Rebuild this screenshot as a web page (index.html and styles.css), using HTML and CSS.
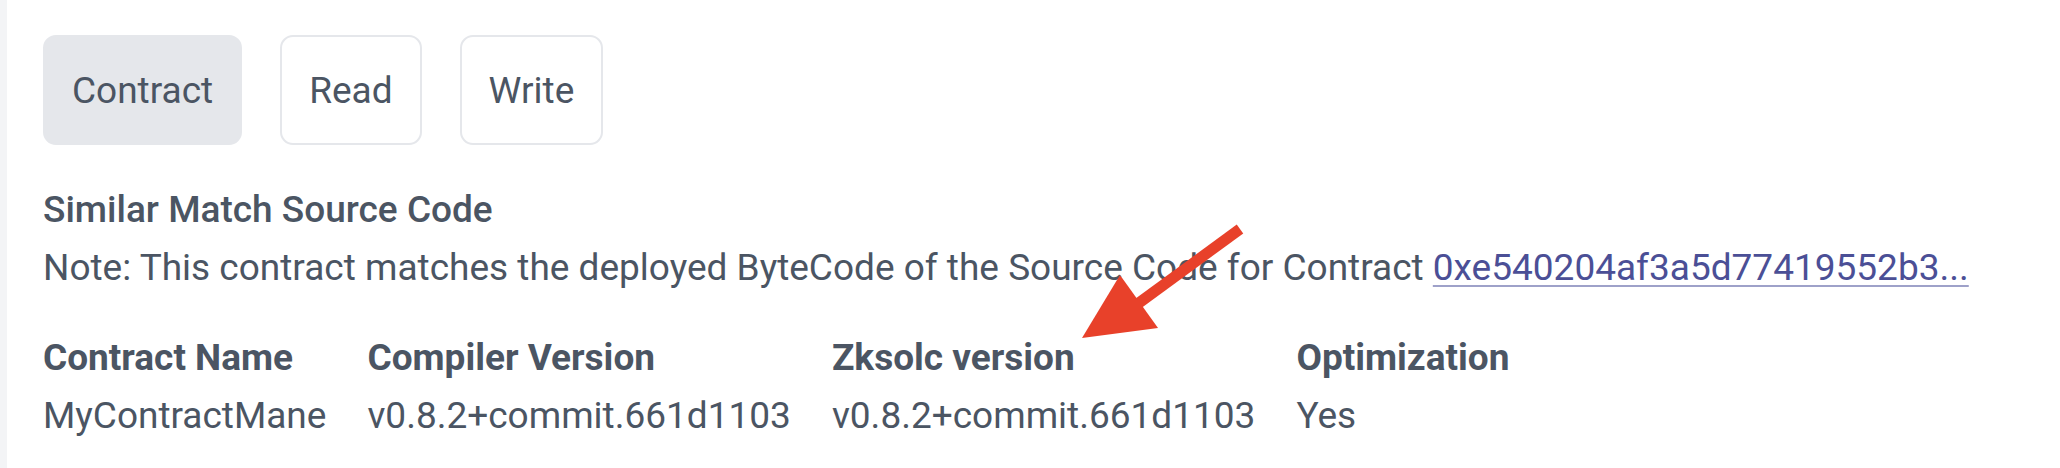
FILE: index.html
```html
<!DOCTYPE html>
<html lang="en">
<head>
<meta charset="utf-8">
<title>Contract</title>
<link rel="stylesheet" href="styles.css">
</head>
<body>
<main class="card">
  <nav class="tabs">
    <button class="tab tab-active">Contract</button>
    <button class="tab">Read</button>
    <button class="tab">Write</button>
  </nav>
  <section class="source">
    <h2 class="source-title">Similar Match Source Code</h2>
    <p class="source-note">Note: This contract matches the deployed ByteCode of the Source Code for Contract <a class="source-link" href="#">0xe540204af3a5d77419552b3...</a></p>
  </section>
  <section class="info">
    <div class="info-col">
      <div class="info-label">Contract Name</div>
      <div class="info-value">MyContractMane</div>
    </div>
    <div class="info-col">
      <div class="info-label">Compiler Version</div>
      <div class="info-value">v0.8.2+commit.661d1103</div>
    </div>
    <div class="info-col">
      <div class="info-label">Zksolc version</div>
      <div class="info-value">v0.8.2+commit.661d1103</div>
    </div>
    <div class="info-col">
      <div class="info-label">Optimization</div>
      <div class="info-value">Yes</div>
    </div>
  </section>
</main>
<svg class="annotation" width="2060" height="468" viewBox="0 0 2060 468" aria-hidden="true">
  <line x1="1240" y1="229" x2="1132" y2="308" stroke="#e8412a" stroke-width="11"/>
  <polygon points="1082,338 1120,275 1158,328" fill="#e8412a"/>
</svg>
</body>
</html>
```
FILE: styles.css
```css
html, body {
  margin: 0;
  padding: 0;
  height: 100%;
}
body {
  background: #f3f4f6;
  font-family: Roboto, "Liberation Sans", sans-serif;
  color: #4b5563;
  position: relative;
  overflow: hidden;
}
.card {
  margin-left: 7px;
  background: #ffffff;
  height: 100%;
  padding: 35px 36px 0 36px;
  box-sizing: border-box;
}
.tabs {
  display: flex;
  gap: 38px;
}
.tab {
  font-family: inherit;
  font-size: 37px;
  color: #4b5563;
  background: #ffffff;
  border: 2px solid #e5e7eb;
  border-radius: 13px;
  height: 110px;
  padding: 0 27px;
  line-height: 1;
  cursor: pointer;
}
.tab-active {
  background: #e5e7eb;
}
.source {
  margin-top: 36px;
}
.source-title {
  margin: 0;
  font-size: 37px;
  font-weight: 500;
  line-height: 58px;
}
.source-note {
  margin: 0;
  font-size: 37px;
  line-height: 58px;
}
.source-link {
  color: #4b4f96;
  text-decoration: underline;
  text-decoration-color: #9ea1c9;
  text-underline-offset: 5px;
  text-decoration-thickness: 2px;
}
.info {
  display: flex;
  gap: 41px;
  margin-top: 32px;
}
.info-label {
  font-size: 37px;
  font-weight: 700;
  line-height: 58px;
}
.info-value {
  font-size: 37px;
  line-height: 58px;
}
.annotation {
  position: absolute;
  left: 0;
  top: 0;
  pointer-events: none;
}
```
